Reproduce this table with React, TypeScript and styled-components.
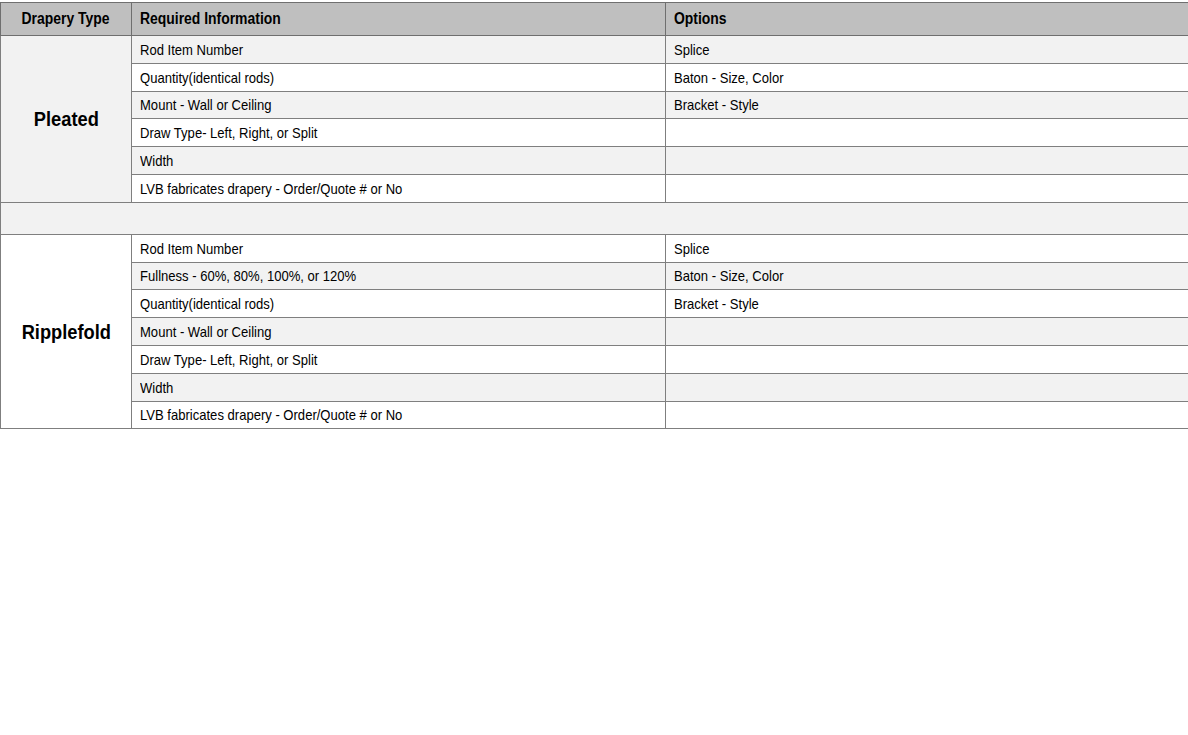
import styled, { createGlobalStyle } from "styled-components";

const GlobalStyle = createGlobalStyle`
  html, body {
    margin: 0;
    padding: 0;
    background: #ffffff;
  }
  body {
    padding-top: 2px;
    font-family: "Liberation Sans Narrow", "Arial Narrow", "Liberation Sans", Arial, sans-serif;
    color: #000;
  }
`;

const Table = styled.table`
  width: 1188px;
  border-collapse: collapse;
  table-layout: fixed;
  border: 1px solid #6f6f6f;
`;

// the reference uses a condensed face; squeeze Liberation Sans to match
const Narrow = styled.span<{ $center?: boolean }>`
  display: inline-block;
  transform: scaleX(0.87);
  transform-origin: ${(p) => (p.$center ? "center" : "left")} center;
`;

const HeadCell = styled.th<{ $center?: boolean }>`
  background: #bfbfbf;
  border: 1px solid #6f6f6f;
  height: 32px;
  padding: 0 8px;
  font-size: 16px;
  font-weight: bold;
  text-align: ${(p) => (p.$center ? "center" : "left")};
  vertical-align: middle;
  white-space: nowrap;
`;

const Cell = styled.td<{ $shade?: boolean }>`
  background: ${(p) => (p.$shade ? "#f2f2f2" : "#ffffff")};
  border: 1px solid #7f7f7f;
  border-left-color: #9a9a9a;
  height: 26.8px;
  padding: 0 8px;
  font-size: 15px;
  vertical-align: middle;
  white-space: nowrap;
`;

const TypeCell = styled.td<{ $shade?: boolean }>`
  background: ${(p) => (p.$shade ? "#f2f2f2" : "#ffffff")};
  border: 1px solid #7f7f7f;
  text-align: center;
  vertical-align: middle;
  font-size: 21px;
  font-weight: bold;
  white-space: nowrap;
`;

const Spacer = styled.td`
  background: #f2f2f2;
  border: 1px solid #7f7f7f;
  height: 31px;
  padding: 0;
`;

type Group = {
  name: string;
  shadeType: boolean;
  firstShaded: boolean;
  required: string[];
  options: string[];
};

const groups: Group[] = [
  {
    name: "Pleated",
    shadeType: true,
    firstShaded: true,
    required: [
      "Rod Item Number",
      "Quantity(identical rods)",
      "Mount - Wall or Ceiling",
      "Draw Type- Left, Right, or Split",
      "Width",
      "LVB fabricates drapery - Order/Quote # or No",
    ],
    options: ["Splice", "Baton - Size, Color", "Bracket - Style"],
  },
  {
    name: "Ripplefold",
    shadeType: false,
    firstShaded: false,
    required: [
      "Rod Item Number",
      "Fullness - 60%, 80%, 100%, or 120%",
      "Quantity(identical rods)",
      "Mount - Wall or Ceiling",
      "Draw Type- Left, Right, or Split",
      "Width",
      "LVB fabricates drapery - Order/Quote # or No",
    ],
    options: ["Splice", "Baton - Size, Color", "Bracket - Style"],
  },
];

const GroupRows = ({ group }: { group: Group }) => (
  <>
    {group.required.map((item, i) => {
      const shade = group.firstShaded ? i % 2 === 0 : i % 2 === 1;
      const option = group.options[i];
      return (
        <tr key={item}>
          {i === 0 && (
            <TypeCell rowSpan={group.required.length} $shade={group.shadeType}>
              <Narrow $center>{group.name}</Narrow>
            </TypeCell>
          )}
          <Cell $shade={shade}>
            <Narrow>{item}</Narrow>
          </Cell>
          <Cell $shade={shade}>{option && <Narrow>{option}</Narrow>}</Cell>
        </tr>
      );
    })}
  </>
);

export default function App() {
  return (
    <>
      <GlobalStyle />
      <Table>
        <colgroup>
          <col style={{ width: 131 }} />
          <col style={{ width: 534 }} />
          <col style={{ width: 523 }} />
        </colgroup>
        <thead>
          <tr>
            <HeadCell $center>
              <Narrow $center>Drapery Type</Narrow>
            </HeadCell>
            <HeadCell>
              <Narrow>Required Information</Narrow>
            </HeadCell>
            <HeadCell>
              <Narrow>Options</Narrow>
            </HeadCell>
          </tr>
        </thead>
        <tbody>
          <GroupRows group={groups[0]} />
          <tr>
            <Spacer colSpan={3} />
          </tr>
          <GroupRows group={groups[1]} />
        </tbody>
      </Table>
    </>
  );
}
